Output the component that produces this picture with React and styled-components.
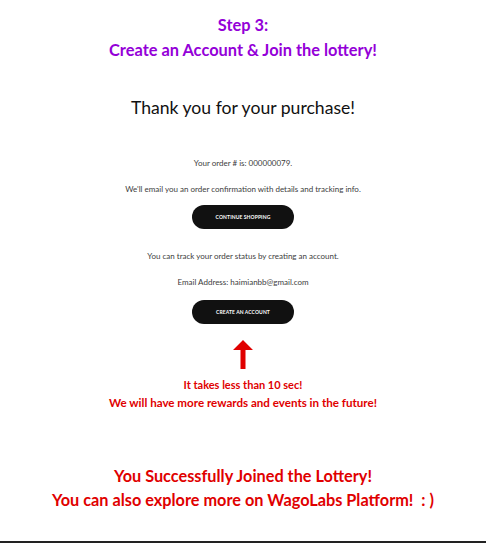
import React from "react";
import styled, {createGlobalStyle} from "styled-components";

const Global = createGlobalStyle`
  html, body {
    margin: 0;
    padding: 0;
    background: #fff;
  }
  body {
    font-family: Lato, "Noto Sans", sans-serif;
  }
`;

const Page = styled.div`
  width: 486px;
  height: 543px;
  display: flex;
  flex-direction: column;
  align-items: center;
  box-sizing: border-box;
  border-bottom: 2px solid #222;
  text-align: center;
`;

const StepTitle = styled.div`
  margin-top: 12px;
  color: #9400d8;
  font-weight: 700;
  font-size: 16.4px;
  line-height: 25px;
`;

const Thanks = styled.h1`
  margin: 33px 0 0;
  font-weight: 400;
  font-size: 17.6px;
  line-height: 26px;
  color: #111;
`;

const Note = styled.p`
  margin: ${p => p.$top || 0}px 0 0;
  font-size: 8px;
  line-height: 12px;
  color: #3c3c3c;
`;

const PillButton = styled.button`
  margin-top: ${p => p.$top || 0}px;
  width: 102px;
  height: 24px;
  border: none;
  border-radius: 12px;
  background: #111;
  color: #fff;
  font-family: inherit;
  font-size: 5px;
  font-weight: 700;
  letter-spacing: 0.1px;
  text-transform: uppercase;
  cursor: pointer;
`;

const Arrow = styled.svg`
  margin-top: 16px;
  display: block;
`;

const RedLine = styled.div`
  color: #e00000;
  font-weight: 700;
  font-size: ${p => p.$size}px;
  line-height: ${p => p.$line}px;
  margin-top: ${p => p.$top || 0}px;
`;

export default function App() {
  return (
    <>
      <Global />
      <Page>
        <StepTitle>
          Step 3:
          <br />
          Create an Account &amp; Join the lottery!
        </StepTitle>

        <Thanks>Thank you for your purchase!</Thanks>

        <Note $top={36}>Your order # is: 000000079.</Note>
        <Note $top={14}>
          We'll email you an order confirmation with details and tracking info.
        </Note>
        <PillButton $top={10}>Continue Shopping</PillButton>

        <Note $top={21}>You can track your order status by creating an account.</Note>
        <Note $top={14}>Email Address: haimianbb@gmail.com</Note>
        <PillButton $top={12}>Create an Account</PillButton>

        <Arrow width="20" height="30" viewBox="0 0 20 30">
          <polygon points="10,0 20,10 12.5,10 12.5,29 7.5,29 7.5,10 0,10" fill="#e00000" />
        </Arrow>

        <RedLine $size={11} $line={18} $top={6}>It takes less than 10 sec!</RedLine>
        <RedLine $size={11.6} $line={18}>We will have more rewards and events in the future!</RedLine>

        <RedLine $size={16.3} $line={24} $top={52}>You Successfully Joined the Lottery!</RedLine>
        <RedLine $size={16.3} $line={24}>You can also explore more on WagoLabs Platform!&nbsp; : )</RedLine>
      </Page>
    </>
  );
}
